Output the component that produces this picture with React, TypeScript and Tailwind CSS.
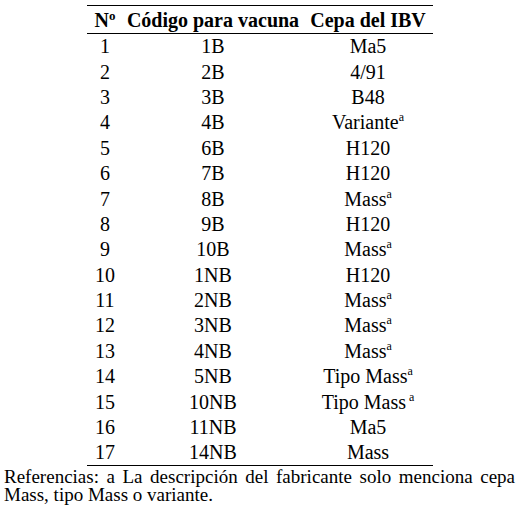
const rows: [string, string, string, "" | "a" | " a"][] = [
  ["1", "1B", "Ma5", ""],
  ["2", "2B", "4/91", ""],
  ["3", "3B", "B48", ""],
  ["4", "4B", "Variante", "a"],
  ["5", "6B", "H120", ""],
  ["6", "7B", "H120", ""],
  ["7", "8B", "Mass", "a"],
  ["8", "9B", "H120", ""],
  ["9", "10B", "Mass", "a"],
  ["10", "1NB", "H120", ""],
  ["11", "2NB", "Mass", "a"],
  ["12", "3NB", "Mass", "a"],
  ["13", "4NB", "Mass", "a"],
  ["14", "5NB", "Tipo Mass", "a"],
  ["15", "10NB", "Tipo Mass", " a"],
  ["16", "11NB", "Ma5", ""],
  ["17", "14NB", "Mass", ""],
];

function Sup({ text }: { text: string }) {
  if (!text) return null;
  return (
    <sup className="relative -top-[8px] text-[12px] leading-none">
      {text.startsWith(" ") ? "\u00a0a" : "a"}
    </sup>
  );
}

export default function App() {
  return (
    <div className="h-[510px] w-[520px] bg-white pt-[5px] text-black [font-family:'Liberation_Serif','Times_New_Roman',serif]">
      <table className="ml-[87px] w-[346px] table-fixed border-collapse text-[20px] leading-none">
        <colgroup>
          <col className="w-[36px]" />
          <col className="w-[180px]" />
          <col className="w-[130px]" />
        </colgroup>
        <thead>
          <tr className="h-[28px] border-y-[1.5px] border-black font-bold">
            <th className="whitespace-nowrap pt-[1px] text-center">
              N<sup className="relative -top-[7px] text-[13px] leading-none">o</sup>
            </th>
            <th className="whitespace-nowrap pt-[1px] text-center">Código para vacuna</th>
            <th className="whitespace-nowrap pt-[1px] text-center">Cepa del IBV</th>
          </tr>
        </thead>
        <tbody className="border-b-[1.5px] border-black">
          {rows.map(([n, code, cepa, sup]) => (
            <tr key={n} className="h-[25.4px]">
              <td className="text-center">{n}</td>
              <td className="text-center">{code}</td>
              <td className="whitespace-nowrap text-center">
                {cepa}
                <Sup text={sup} />
              </td>
            </tr>
          ))}
        </tbody>
      </table>
      <p className="ml-[4px] mt-[2px] w-[511px] text-justify text-[19px] leading-[18.5px]">
        Referencias: a La descripción del fabricante solo menciona cepa Mass, tipo Mass o variante.
      </p>
    </div>
  );
}
